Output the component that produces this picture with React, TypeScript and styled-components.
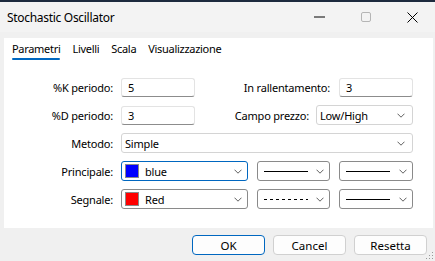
import React from "react";
import styled, { createGlobalStyle } from "styled-components";

const GlobalStyle = createGlobalStyle`
  html, body {
    margin: 0;
    padding: 0;
    background: #f0f0f0;
    font-family: "Segoe UI", "Noto Sans", sans-serif;
    font-size: 11px;
    color: #000;
  }
  * { box-sizing: border-box; }
`;

const Window = styled.div`
  position: relative;
  width: 435px;
  height: 261px;
  display: flex;
  flex-direction: column;
  background: #f0f0f0;
  border-top: 2px solid #1d2a3e;
  overflow: hidden;
`;

const TitleBar = styled.div`
  height: 30px;
  display: flex;
  align-items: center;
  padding-left: 7px;
  background: #f3f3f3;
`;

const Title = styled.div`
  flex: 1;
  font-size: 12px;
  letter-spacing: -0.3px;
`;

const WinButton = styled.div`
  width: 46px;
  height: 30px;
  display: flex;
  align-items: center;
  justify-content: center;
`;

const Panel = styled.div`
  margin: 6px 2px 0 4px;
  height: 190px;
  background: #fff;
  display: flex;
  flex-direction: column;
  padding: 0 20px 0 8px;
`;

const Tabs = styled.div`
  display: flex;
  gap: 12px;
  height: 20px;
  margin-top: 2px;
`;

const Tab = styled.div<{ $active?: boolean }>`
  position: relative;
  padding-top: 1px;
  letter-spacing: -0.3px;
  &::after {
    content: "";
    display: ${(p) => (p.$active ? "block" : "none")};
    position: absolute;
    left: 0;
    right: 0;
    bottom: 0;
    height: 2px;
    border-radius: 1px;
    background: #0067c0;
  }
`;

const Form = styled.div`
  margin-top: 17px;
  display: flex;
  flex-direction: column;
  gap: 8px;
`;

const Row = styled.div`
  display: flex;
  align-items: center;
  height: 20px;
`;

const Label = styled.div<{ $w?: number; $gap?: number }>`
  width: ${(p) => p.$w ?? 109}px;
  text-align: right;
  white-space: nowrap;
  padding-right: ${(p) => p.$gap ?? 8}px;
  letter-spacing: -0.2px;
`;

const Group = styled.div`
  margin-left: auto;
  display: flex;
  align-items: center;
`;

const Controls = styled.div`
  display: flex;
  gap: 9px;
`;

const Input = styled.div<{ $w: number }>`
  width: ${(p) => p.$w}px;
  height: 19px;
  border: 1px solid #e3e3e3;
  border-bottom-color: #8c8c8c;
  border-radius: 3px;
  padding: 0 6px;
  display: flex;
  align-items: center;
`;

const Select = styled.div<{ $w?: number; $dark?: boolean; $focus?: boolean; $pr?: number }>`
  width: ${(p) => (p.$w ? `${p.$w}px` : "auto")};
  flex: ${(p) => (p.$w ? "none" : "1")};
  height: 20px;
  border: 1px solid
    ${(p) => (p.$focus ? "#0067c0" : p.$dark ? "#8a8a8a" : "#d4d4d4")};
  border-radius: 3px;
  background: #fff;
  display: flex;
  align-items: center;
  padding: 0 ${(p) => p.$pr ?? 5}px 0 3px;
  gap: 6px;
`;

const SelectText = styled.div`
  flex: 1;
  letter-spacing: -0.2px;
  white-space: nowrap;
`;

const Swatch = styled.div<{ $c: string }>`
  width: 14px;
  height: 14px;
  border: 1px solid #8a8a8a;
  background: ${(p) => p.$c};
`;

const LineBox = styled.div`
  flex: 1;
  display: flex;
  align-items: center;
  padding-left: 3px;
`;

const Footer = styled.div`
  display: flex;
  justify-content: flex-end;
  gap: 8px;
  padding: 7px 8px 0 0;
`;

const Button = styled.div<{ $default?: boolean }>`
  width: 73px;
  height: 20px;
  border: 1px solid ${(p) => (p.$default ? "#0067c0" : "#d0d0d0")};
  border-radius: 4px;
  background: #fdfdfd;
  display: flex;
  align-items: center;
  justify-content: center;
  font-size: 11.5px;
`;

const Grip = styled.svg`
  position: absolute;
  right: 1px;
  bottom: 1px;
`;

const Chevron = () => (
  <svg width="8" height="5" viewBox="0 0 8 5" style={{ flex: "none" }}>
    <polyline points="0.5,0.7 4,4.2 7.5,0.7" fill="none" stroke="#606060" strokeWidth="1" />
  </svg>
);

const LineSample = ({ dashed }: { dashed?: boolean }) => (
  <LineBox>
    <svg width="44" height="3" viewBox="0 0 44 3">
      <line
        x1="0"
        y1="1.5"
        x2="44"
        y2="1.5"
        stroke="#000"
        strokeWidth="1"
        strokeDasharray={dashed ? "3 3" : undefined}
      />
    </svg>
  </LineBox>
);

export default function App() {
  return (
    <>
      <GlobalStyle />
      <Window>
        <TitleBar>
          <Title>Stochastic Oscillator</Title>
          <WinButton>
            <svg width="12" height="2" viewBox="0 0 12 2">
              <line x1="0" y1="1" x2="11" y2="1" stroke="#000" strokeWidth="1" />
            </svg>
          </WinButton>
          <WinButton>
            <svg width="11" height="11" viewBox="0 0 11 11">
              <rect x="0.5" y="0.5" width="9" height="9" rx="1.5" fill="none" stroke="#b5b5b5" />
            </svg>
          </WinButton>
          <WinButton>
            <svg width="11" height="11" viewBox="0 0 11 11">
              <path d="M0.5 0.5 L10.5 10.5 M10.5 0.5 L0.5 10.5" stroke="#000" strokeWidth="1" />
            </svg>
          </WinButton>
        </TitleBar>
        <Panel>
          <Tabs>
            <Tab $active>Parametri</Tab>
            <Tab>Livelli</Tab>
            <Tab>Scala</Tab>
            <Tab>Visualizzazione</Tab>
          </Tabs>
          <Form>
            <Row>
              <Label>%K periodo:</Label>
              <Input $w={74}>5</Input>
              <Group>
                <Label $w={120} $gap={9}>In rallentamento:</Label>
                <Input $w={74}>3</Input>
              </Group>
            </Row>
            <Row>
              <Label>%D periodo:</Label>
              <Input $w={74}>3</Input>
              <Group>
                <Label $w={110} $gap={7}>Campo prezzo:</Label>
                <Select $w={97} $pr={7}>
                  <SelectText>Low/High</SelectText>
                  <Chevron />
                </Select>
              </Group>
            </Row>
            <Row>
              <Label>Metodo:</Label>
              <Select $pr={7}>
                <SelectText>Simple</SelectText>
                <Chevron />
              </Select>
            </Row>
            <Row>
              <Label>Principale:</Label>
              <Controls>
                <Select $w={127} $focus>
                  <Swatch $c="#0000ff" />
                  <SelectText>blue</SelectText>
                  <Chevron />
                </Select>
                <Select $w={73} $dark>
                  <LineSample />
                  <Chevron />
                </Select>
                <Select $w={74} $dark>
                  <LineSample />
                  <Chevron />
                </Select>
              </Controls>
            </Row>
            <Row>
              <Label>Segnale:</Label>
              <Controls>
                <Select $w={127} $dark>
                  <Swatch $c="#ff0000" />
                  <SelectText>Red</SelectText>
                  <Chevron />
                </Select>
                <Select $w={73} $dark>
                  <LineSample dashed />
                  <Chevron />
                </Select>
                <Select $w={74} $dark>
                  <LineSample />
                  <Chevron />
                </Select>
              </Controls>
            </Row>
          </Form>
        </Panel>
        <Footer>
          <Button $default>OK</Button>
          <Button>Cancel</Button>
          <Button>Resetta</Button>
        </Footer>
        <Grip width="8" height="8" viewBox="0 0 8 8">
          <rect x="6" y="0" width="1" height="1" fill="#999" />
          <rect x="3" y="3" width="1" height="1" fill="#999" />
          <rect x="6" y="3" width="1" height="1" fill="#999" />
          <rect x="0" y="6" width="1" height="1" fill="#999" />
          <rect x="3" y="6" width="1" height="1" fill="#999" />
          <rect x="6" y="6" width="1" height="1" fill="#999" />
        </Grip>
      </Window>
    </>
  );
}
